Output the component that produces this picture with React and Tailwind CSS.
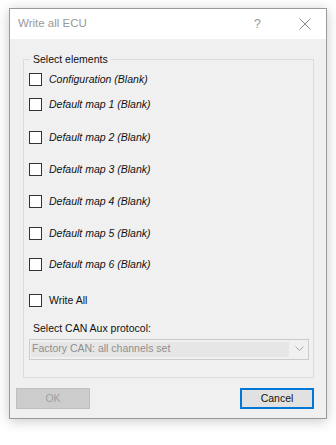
import { useState } from 'react'

const ITEMS = [
    { label: 'Configuration (Blank)', mt: 'mt-[7px]' },
    { label: 'Default map 1 (Blank)', mt: 'mt-[12px]' },
    { label: 'Default map 2 (Blank)', mt: 'mt-[20px]' },
    { label: 'Default map 3 (Blank)', mt: 'mt-[19px]' },
    { label: 'Default map 4 (Blank)', mt: 'mt-[19px]' },
    { label: 'Default map 5 (Blank)', mt: 'mt-[19px]' },
    { label: 'Default map 6 (Blank)', mt: 'mt-[18px]' },
]

function Check({ checked, onChange, label, italic, className }) {
    return (
        <label className={"flex items-center h-[13px] ml-[5px] cursor-default " + className}>
            <span
                className="w-[13px] h-[13px] border border-[#333333] bg-white flex items-center justify-center"
                onClick={onChange}
            >
                {checked ? (
                    <svg width="9" height="9" viewBox="0 0 9 9">
                        <path d="M1 4.5 L3.5 7 L8 1.5" stroke="#222" strokeWidth="1.4" fill="none" />
                    </svg>
                ) : null}
            </span>
            <span className={"ml-[7px] text-[10.5px] leading-none text-[#111] " + (italic ? 'italic' : '')}>{label}</span>
        </label>
    )
}

export default function App() {
    const [checks, setChecks] = useState(ITEMS.map(() => false))
    const [all, setAll] = useState(false)

    const toggle = i => setChecks(c => c.map((v, j) => (j === i ? !v : v)))

    return (
        <div className="w-[336px] h-[445px] bg-white pt-[8px] pl-[9px]" style={{ fontFamily: '"Liberation Sans", Arial, sans-serif' }}>
            <div className="w-[318px] h-[411px] border border-[#9a9a9a] bg-[#f0f0f0] flex flex-col shadow-[0_2px_12px_rgba(0,0,0,0.22)]">
                {/* title bar */}
                <div className="h-[30px] bg-white flex items-center pl-[8px] pr-[15px]">
                    <span className="text-[11.5px] text-[#999999]">Write all ECU</span>
                    <span className="ml-auto text-[13px] text-[#9a9a9a] mr-[38px]">?</span>
                    <svg width="12" height="12" viewBox="0 0 12 12">
                        <path d="M0.5 0.5 L11.5 11.5 M11.5 0.5 L0.5 11.5" stroke="#8a8a8a" strokeWidth="1" />
                    </svg>
                </div>

                {/* body */}
                <div className="flex-1 flex flex-col">
                    <fieldset className="mt-[14px] ml-[13px] w-[291px] h-[325px] border border-[#dcdcdc] px-0 pb-0 pt-0 flex flex-col">
                        <legend className="ml-[6px] px-[3px] text-[10.5px] text-[#111] leading-[13px]">Select elements</legend>
                        {ITEMS.map((it, i) => (
                            <Check key={it.label} className={it.mt} label={it.label} italic checked={checks[i]} onChange={() => toggle(i)} />
                        ))}
                        <Check className="mt-[23px]" label="Write All" checked={all} onChange={() => setAll(a => !a)} />

                        <div className="mt-[16px] ml-[9px] text-[10.5px] text-[#111] leading-none">Select CAN Aux protocol:</div>
                        <div className="mt-[5px] ml-[5px] w-[280px] h-[21px] border border-[#cccccc] bg-[#f0f0f0] flex items-center px-[1px]">
                            <div className="w-[258px] h-[15px] bg-[#e6e6e6] flex items-center pl-[1px] text-[10.5px] text-[#8f8f8f]">
                                Factory CAN: all channels set
                            </div>
                            <svg className="ml-[6px]" width="9" height="6" viewBox="0 0 9 6">
                                <path d="M0.5 0.5 L4.5 4.5 L8.5 0.5" stroke="#a8a8a8" strokeWidth="1" fill="none" />
                            </svg>
                        </div>
                    </fieldset>

                    <div className="mt-[10px] flex items-center pl-[6px] pr-[12px]">
                        <button disabled className="w-[74px] h-[21px] border border-[#bfbfbf] bg-[#cccccc] text-[10.5px] text-[#a0a0a0]">OK</button>
                        <button className="ml-auto w-[74px] h-[21px] border-2 border-[#0078d7] bg-[#e1e1e1] text-[10.5px] text-[#111]">Cancel</button>
                    </div>
                </div>
            </div>
        </div>
    )
}
